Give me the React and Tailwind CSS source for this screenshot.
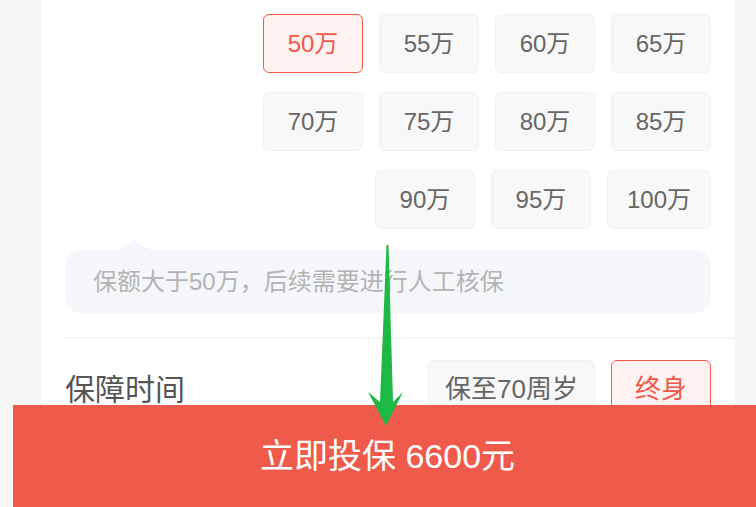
const amounts = [
  ["50万", "55万", "60万", "65万"],
  ["70万", "75万", "80万", "85万"],
  ["90万", "95万", "100万"],
];

function Option({ label, active, size = "text-[24px]", pad = "px-[19px]" }) {
  return (
    <div
      className={`h-[59px] min-w-[100px] ${pad} flex items-center justify-center rounded-md border ${size} ${
        active
          ? "border-[#f0594a] bg-[#fff2f1] text-[#f0594a]"
          : "border-[#f1f1f1] bg-[#f8f8f8] text-[#666666]"
      }`}
    >
      {label}
    </div>
  );
}

export default function App() {
  return (
    <div className="relative h-[507px] overflow-hidden bg-[#f7f7f7] pl-[41px] pr-[21px] font-['Liberation_Sans','Noto_Sans_CJK_SC',sans-serif]">
      <div className="h-full bg-white px-6 pt-[14px]">
        <div className="flex flex-col items-end gap-y-[19px]">
          {amounts.map((row, i) => (
            <div key={i} className="flex gap-4">
              {row.map((a) => (
                <Option key={a} label={a} active={a === "50万"} />
              ))}
            </div>
          ))}
        </div>

        <div className="relative mt-[21px] flex h-[63px] items-center rounded-2xl bg-[#f6f7fb] px-[28px] text-[24px] text-[#b3b3b3]">
          <div className="absolute -top-[10px] left-[54px] h-0 w-0 border-x-[16px] border-b-[10px] border-x-transparent border-b-[#f6f7fb]" />
          保额大于50万，后续需要进行人工核保
        </div>

        <div className="-mr-6 mt-[25px] border-t border-[#f0f0f0]" />

        <div className="mt-[21px] flex items-center justify-between">
          <span className="text-[30px] text-[#555555]">保障时间</span>
          <div className="flex gap-4">
            <Option label="保至70周岁" size="text-[26px]" pad="px-4" />
            <Option label="终身" active size="text-[26px]" pad="px-4" />
          </div>
        </div>
      </div>

      <div className="fixed bottom-0 left-[13px] right-0 flex h-[102px] items-center justify-center bg-[#f05a4b] pl-[6px] text-[34px] text-white">
        立即投保 6600元
      </div>

      <svg className="pointer-events-none fixed inset-0" width="756" height="507">
        <polygon
          fill="#1db944"
          points="386.5,245 388.5,245 393,402 403,392 386,426 368,392 380,402"
        />
      </svg>
    </div>
  );
}
